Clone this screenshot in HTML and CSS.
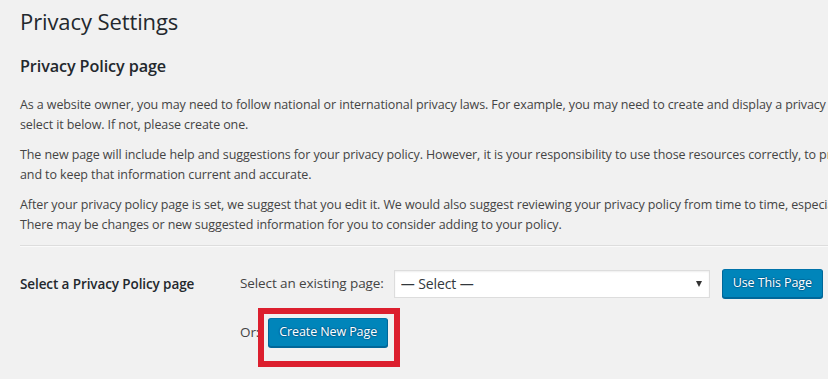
FILE: index.html
```html
<!DOCTYPE html>
<html lang="en">
<head>
    <meta charset="UTF-8">
    <meta name="viewport" content="width=device-width, initial-scale=1.0">
    <title>Privacy Settings</title>
    <link rel="stylesheet" href="styles.css">
</head>
<body>
    <div class="wrap">
        <h1>Privacy Settings</h1>

        <h2>Privacy Policy page</h2>
        <p>
            As a website owner, you may need to follow national or international privacy laws. For example, you may need to create and display a privacy policy. If you already have a privacy policy page, please<br>
            select it below. If not, please create one.
        </p>
        <p>
            The new page will include help and suggestions for your privacy policy. However, it is your responsibility to use those resources correctly, to provide the information<br>
            and to keep that information current and accurate.
        </p>
        <p>
            After your privacy policy page is set, we suggest that you edit it. We would also suggest reviewing your privacy policy from time to time, especially after installing<br>
            There may be changes or new suggested information for you to consider adding to your policy.
        </p>

        <hr>

        <div class="form-row">
            <div class="form-label">Select a Privacy Policy page</div>
            <div class="form-field">
                <div class="field-line">
                    <label for="page_for_privacy_policy">Select an existing page:</label>
                    <span class="select-wrap">
                        <select id="page_for_privacy_policy">
                            <option value="0">&mdash; Select &mdash;</option>
                        </select>
                    </span>
                    <button class="button-primary">Use This Page</button>
                </div>
                <div class="field-line">
                    <span class="or-text">Or:</span>
                    <span class="marked">
                        <button class="button-primary">Create New Page</button>
                        <span class="highlight-box"></span>
                    </span>
                </div>
            </div>
        </div>
    </div>
</body>
</html>
```

FILE: styles.css
```css
html, body {
    margin: 0;
    background-color: #f1f1f1;
}

body {
    font-family: 'Open Sans', 'Noto Sans', sans-serif;
    font-size: 12.5px;
    letter-spacing: -0.1px;
    color: #444;
    line-height: 1.45;
    overflow: hidden;
    min-height: 100vh;
}

.wrap {
    width: 1100px;
    padding-left: 20px;
    padding-bottom: 40px;
}

h1 {
    font-size: 22px;
    font-weight: 400;
    color: #23282d;
    margin: 0;
    padding-top: 7px;
    line-height: 1.3;
}

h2 {
    font-size: 16.2px;
    font-weight: 600;
    color: #23282d;
    margin: 21px 0 19px;
    line-height: 1.2;
}

p {
    margin: 0 0 11px;
    line-height: 19.5px;
    white-space: nowrap;
}

hr {
    border: 0;
    border-top: 1px solid #ddd;
    border-bottom: 1px solid #fafafa;
    margin: 10px 0 0;
}

.form-row {
    display: flex;
    padding-top: 22px;
}

.form-label {
    width: 220px;
    font-size: 13.5px;
    font-weight: 600;
    color: #23282d;
    padding-top: 6px;
}

.form-field {
    display: flex;
    flex-direction: column;
    gap: 20px;
    font-size: 13.5px;
}

.field-line {
    display: flex;
    align-items: center;
}

.field-line label {
    margin-right: 10px;
}

.select-wrap {
    position: relative;
    margin-right: 12px;
}

select {
    appearance: none;
    -webkit-appearance: none;
    width: 316px;
    height: 28px;
    padding: 2px 24px 2px 6px;
    border: 1px solid #ddd;
    border-radius: 0;
    background-color: #fff;
    box-shadow: inset 0 1px 2px rgba(0, 0, 0, 0.07);
    color: #32373c;
    font-family: inherit;
    font-size: 14px;
    letter-spacing: -0.1px;
    display: block;
}

.select-wrap::after {
    content: '';
    position: absolute;
    right: 8px;
    top: 11px;
    border-left: 3px solid transparent;
    border-right: 3px solid transparent;
    border-top: 6px solid #333;
}

.button-primary {
    height: 29px;
    padding: 0 10px 2px;
    border: 1px solid #0073aa;
    border-color: #0073aa #006799 #006799;
    border-radius: 3px;
    background-color: #0085ba;
    box-shadow: 0 1px 0 #006799;
    color: #fff;
    text-shadow: 0 -1px 1px #006799, 1px 0 1px #006799, 0 1px 1px #006799, -1px 0 1px #006799;
    font-family: inherit;
    font-size: 12.5px;
    letter-spacing: -0.1px;
    line-height: 26px;
    cursor: pointer;
    display: block;
}

.or-text {
    margin-right: 9px;
}

.marked {
    position: relative;
    display: block;
}

.highlight-box {
    position: absolute;
    left: -10px;
    right: -12px;
    top: -10px;
    bottom: -20px;
    border: 6px solid #dc1f2e;
}
```
